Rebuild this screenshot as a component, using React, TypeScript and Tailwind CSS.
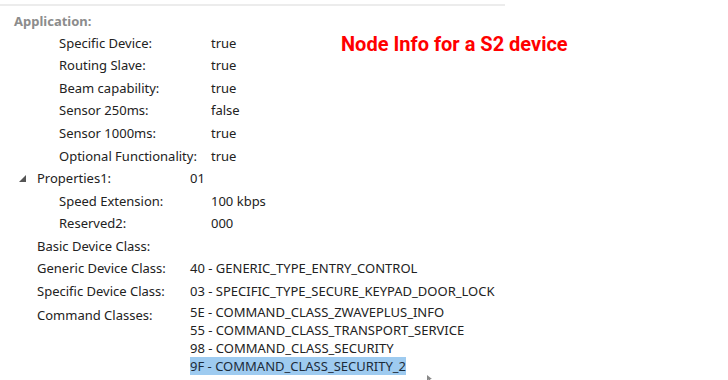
const font = "font-['Segoe_UI','Noto_Sans','Open_Sans',sans-serif]";

type Row = { label: string; value?: string; indent: 0 | 1; toggle?: boolean };

const ROWS: Row[] = [
  { label: "Specific Device:", value: "true", indent: 1 },
  { label: "Routing Slave:", value: "true", indent: 1 },
  { label: "Beam capability:", value: "true", indent: 1 },
  { label: "Sensor 250ms:", value: "false", indent: 1 },
  { label: "Sensor 1000ms:", value: "true", indent: 1 },
  { label: "Optional Functionality:", value: "true", indent: 1 },
  { label: "Properties1:", value: "01", indent: 0, toggle: true },
  { label: "Speed Extension:", value: "100 kbps", indent: 1 },
  { label: "Reserved2:", value: "000", indent: 1 },
  { label: "Basic Device Class:", indent: 0 },
  { label: "Generic Device Class:", value: "40 - GENERIC_TYPE_ENTRY_CONTROL", indent: 0 },
  { label: "Specific Device Class:", value: "03 - SPECIFIC_TYPE_SECURE_KEYPAD_DOOR_LOCK", indent: 0 },
];

const COMMANDS = [
  "5E - COMMAND_CLASS_ZWAVEPLUS_INFO",
  "55 - COMMAND_CLASS_TRANSPORT_SERVICE",
  "98 - COMMAND_CLASS_SECURITY",
  "9F - COMMAND_CLASS_SECURITY_2",
];

function TreeRow({ r }: { r: Row }) {
  // nested rows: label at 59, value at 211; top rows: label at 37, value at 190
  return (
    <div className="flex h-[22.6px] items-center">
      <div className={`relative shrink-0 ${r.indent ? "w-[211px] pl-[59px]" : "w-[190px] pl-[37px]"}`}>
        {r.toggle && (
          <svg className="absolute left-[19px] top-[6px]" width="7" height="7" viewBox="0 0 7 7">
            <path d="M7 0 L7 7 L0 7 Z" fill="#555" />
          </svg>
        )}
        {r.label}
      </div>
      {r.value && <div>{r.value}</div>}
    </div>
  );
}

export default function App() {
  return (
    <div className={`relative w-[728px] h-[380px] overflow-hidden bg-white text-[13px] text-[#222] ${font}`}>
      <div className="ml-0 mt-[4px] w-[505px] h-[2px] bg-[#ececec]" />

      <div className="pl-[14px] pt-[6px] h-[25px] font-bold text-[13px] text-[#8c8c8c]">Application:</div>

      <div className="pt-[1px]">
        {ROWS.map((r) => (
          <TreeRow key={r.label} r={r} />
        ))}
        <div className="flex">
          <div className="w-[190px] shrink-0 pl-[37px] leading-[18px] pt-[3px]">Command Classes:</div>
          <div className="flex flex-col">
            {COMMANDS.map((c, i) => (
              <div
                key={c}
                className={`h-[18px] leading-[18px] w-fit ${i === COMMANDS.length - 1 ? "bg-[#9ecbf0] text-[#1c2b3a]" : ""}`}
              >
                {c}
              </div>
            ))}
          </div>
        </div>
      </div>

      <div className="absolute left-[341px] top-[29px] font-['Roboto',sans-serif] font-bold text-[20px] text-[#ff0000]">
        Node Info for a S2 device
      </div>

      <svg className="absolute left-[427px] top-[375px]" width="6" height="6" viewBox="0 0 6 6">
        <path d="M0 0 L0 6 L1.5 4.5 L3 6 L4 5.5 L3 4 L5 4 Z" fill="#888" />
      </svg>
    </div>
  );
}
